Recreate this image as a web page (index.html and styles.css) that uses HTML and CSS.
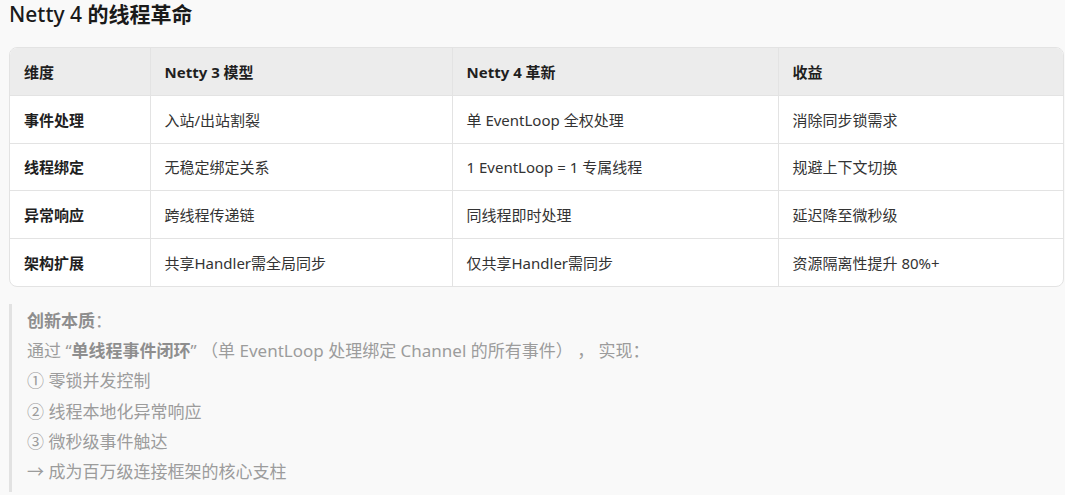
FILE: index.html
```html
<!DOCTYPE html>
<html lang="zh-CN">
<head>
<meta charset="utf-8">
<link rel="stylesheet" href="styles.css">
</head>
<body>
<h3 class="title">Netty 4 <strong>的线程革命</strong></h3>
<div class="table-wrap">
<table class="grid">
<thead>
<tr><th class="c1">维度</th><th class="c2">Netty 3 模型</th><th class="c3">Netty 4 革新</th><th class="c4">收益</th></tr>
</thead>
<tbody>
<tr><td class="key">事件处理</td><td>入站/出站割裂</td><td>单 EventLoop 全权处理</td><td>消除同步锁需求</td></tr>
<tr><td class="key">线程绑定</td><td>无稳定绑定关系</td><td>1 EventLoop = 1 专属线程</td><td>规避上下文切换</td></tr>
<tr><td class="key">异常响应</td><td>跨线程传递链</td><td>同线程即时处理</td><td>延迟降至微秒级</td></tr>
<tr><td class="key">架构扩展</td><td>共享Handler需全局同步</td><td>仅共享Handler需同步</td><td>资源隔离性提升 80%+</td></tr>
</tbody>
</table>
</div>
<blockquote class="note">
<p><strong>创新本质</strong>：</p>
<p>通过 “<strong>单线程事件闭环</strong>” （单 EventLoop 处理绑定 Channel 的所有事件） ， 实现：</p>
<p>① 零锁并发控制</p>
<p>② 线程本地化异常响应</p>
<p>③ 微秒级事件触达</p>
<p>→ 成为百万级连接框架的核心支柱</p>
</blockquote>
</body>
</html>
```
FILE: styles.css
```css
html, body {
  margin: 0;
  padding: 0;
  background: #f9f9f9;
}
body {
  font-family: "Noto Sans", "Noto Sans CJK SC", sans-serif;
  color: #1f1f1f;
  padding: 0 1px 0 9px;
}
.title {
  margin: 0;
  padding-top: 1px;
  height: 46px;
  font-size: 21px;
  line-height: 26px;
  font-weight: 500;
  color: #1a1a1a;
}
.title strong {
  font-weight: 700;
}
.table-wrap {
  border: 1px solid #e3e3e3;
  border-radius: 8px;
  overflow: hidden;
  background: #fff;
}
.grid {
  width: 100%;
  border-collapse: collapse;
  font-size: 15px;
}
.grid th, .grid td {
  text-align: left;
  height: 47.6px;
  padding: 0 14px;
  border-right: 1px solid #e3e3e3;
  border-bottom: 1px solid #e3e3e3;
  box-sizing: border-box;
}
.grid th:last-child, .grid td:last-child {
  border-right: none;
}
.grid tbody tr:last-child td {
  border-bottom: none;
}
.grid th {
  background: #ececec;
  font-weight: 700;
  color: #1f1f1f;
}
.grid td {
  color: #333;
}
.grid td.key {
  font-weight: 700;
  color: #1f1f1f;
}
.c1 { width: 140px; }
.c2 { width: 302px; }
.c3 { width: 326px; }
.note {
  margin: 17px 0 0 0;
  padding: 2px 0 5px 15px;
  border-left: 3px solid #e2e2e2;
  color: #9c9c9c;
  font-size: 17px;
  line-height: 30.2px;
}
.note p {
  margin: 0;
}
.note strong {
  font-weight: 700;
  color: #8e8e8e;
}
```
